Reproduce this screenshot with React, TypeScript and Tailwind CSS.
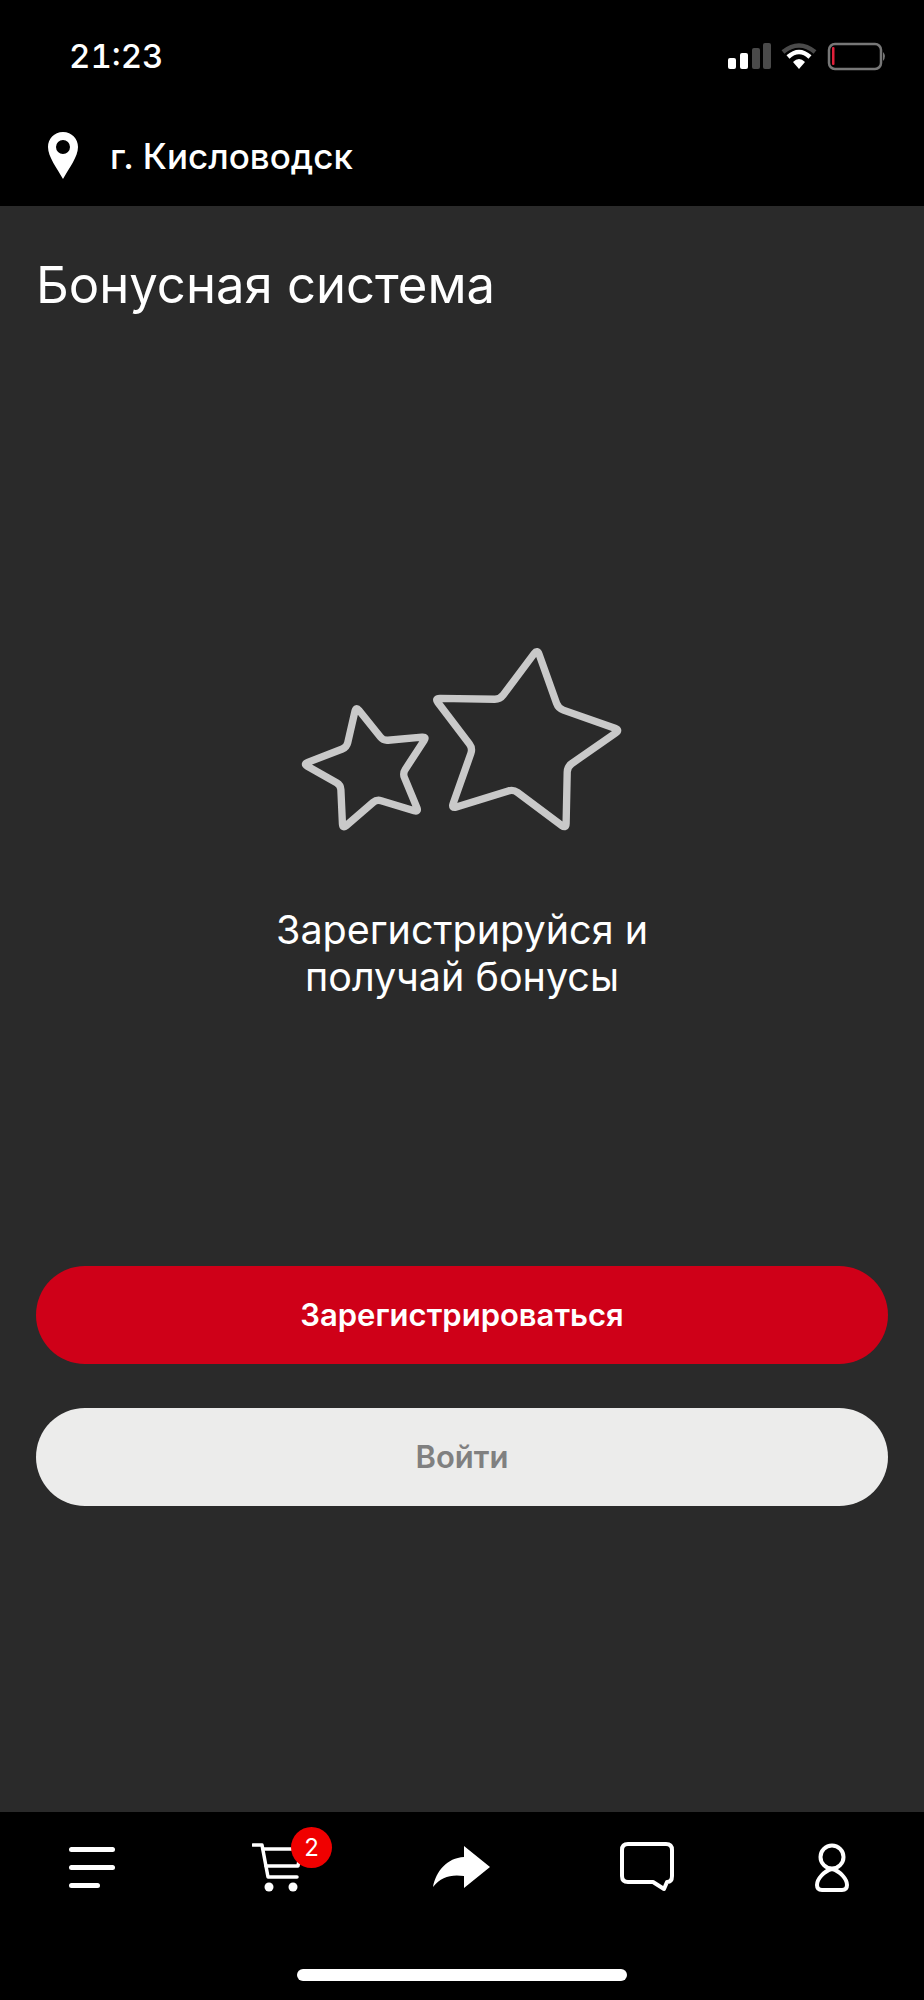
import React from "react";

const font = { fontFamily: "Inter, 'Noto Sans', sans-serif" };

// polygon with softened corners, used for the two stars
function rounded(points: number[][], r: number) {
  let d = "";
  points.forEach((p, i) => {
    const prev = points[(i + points.length - 1) % points.length];
    const next = points[(i + 1) % points.length];
    const a = Math.hypot(prev[0] - p[0], prev[1] - p[1]);
    const b = Math.hypot(next[0] - p[0], next[1] - p[1]);
    const x1 = p[0] + ((prev[0] - p[0]) * r) / a;
    const y1 = p[1] + ((prev[1] - p[1]) * r) / a;
    const x2 = p[0] + ((next[0] - p[0]) * r) / b;
    const y2 = p[1] + ((next[1] - p[1]) * r) / b;
    d += `${i === 0 ? "M" : "L"}${x1} ${y1} Q${p[0]} ${p[1]} ${x2} ${y2} `;
  });
  return d + "Z";
}

const bigStar = [[772, 58], [835, 235], [1020, 300], [862, 410], [858, 596], [700, 478], [514, 536], [578, 355], [464, 205], [660, 208]];
const smallStar = [[228, 230], [310, 332], [440, 320], [368, 430], [416, 546], [290, 508], [188, 596], [182, 465], [70, 402], [200, 352]];

function StatusIcons() {
  return (
    <svg width="160" height="30" viewBox="0 0 160 30" className="block">
      <rect x="0" y="16" width="8" height="11" rx="2" fill="#fff" />
      <rect x="12" y="11" width="8" height="16" rx="2" fill="#fff" />
      <rect x="24" y="6" width="8" height="21" rx="2" fill="#4a4a4a" />
      <rect x="35" y="1" width="8" height="26" rx="2" fill="#4a4a4a" />
      <path d="M55 10 Q71 -3 87 10" fill="none" stroke="#4a4a4a" strokeWidth="4.500" />
      <path d="M60 15 Q71 5 82 15" fill="none" stroke="#fff" strokeWidth="4.500" />
      <path d="M65 20 Q71 14 77 20 L71 27 Z" fill="#fff" />
      <rect x="101" y="2" width="52" height="25" rx="6" fill="none" stroke="#777" strokeWidth="2.500" />
      <rect x="104" y="5" width="2.500" height="18" rx="1" fill="#e0203a" />
      <path d="M155 10 Q159 14 155 19 Z" fill="#777" />
    </svg>
  );
}

function Pin() {
  return (
    <svg width="32" height="47" viewBox="0 0 32 47">
      <path
        fillRule="evenodd"
        fill="#fff"
        d="M16 0C7 0 1 7 1 15c0 10 9 21 15 32 6-11 15-22 15-32C31 7 25 0 16 0Zm0 8a7 7 0 1 1 0 14 7 7 0 0 1 0-14Z"
      />
    </svg>
  );
}

function Stars() {
  return (
    <svg width="360" height="220" viewBox="0 0 1080 660" className="block">
      <g fill="none" stroke="#c9c9c9" strokeWidth="22" strokeLinejoin="round">
        <path d={rounded(bigStar, 16)} />
        <path d={rounded(smallStar, 14)} />
      </g>
    </svg>
  );
}

function MenuIcon() {
  return (
    <div className="flex w-[46px] flex-col gap-[13px]">
      <div className="h-[5px] w-[46px] rounded-full bg-white" />
      <div className="h-[5px] w-[46px] rounded-full bg-white" />
      <div className="h-[5px] w-[31px] rounded-full bg-white" />
    </div>
  );
}

function CartIcon() {
  return (
    <div className="relative h-[50px] w-[50px]">
      <svg width="50" height="50" viewBox="0 0 50 50" className="block">
        <g fill="none" stroke="#fff" strokeWidth="3.500" strokeLinecap="round" strokeLinejoin="round">
          <path d="M1 3 H10 L16 35 H45" />
          <path d="M11 7 H49 L46 24 H14" />
        </g>
        <circle cx="17" cy="45" r="4.500" fill="#fff" />
        <circle cx="41" cy="45" r="4.500" fill="#fff" />
      </svg>
      <div className="absolute left-[39px] top-[-15px] flex h-[41px] w-[41px] items-center justify-center rounded-full bg-[#f00000] text-[24px] text-white">
        2
      </div>
    </div>
  );
}

function ShareIcon() {
  return (
    <svg width="58" height="44" viewBox="0 0 58 44" className="block">
      <path fill="#fff" d="M31 1 L57 22 L31 43 L31 31 C18 29 8 32 0 42 C3 26 14 13 31 12 Z" />
    </svg>
  );
}

function ChatIcon() {
  return (
    <svg width="54" height="50" viewBox="0 0 54 50" className="block">
      <path
        fill="none"
        stroke="#fff"
        strokeWidth="4"
        strokeLinejoin="round"
        d="M8 2 H46 Q52 2 52 8 V34 Q52 40 47 40 L44 47 L33 40 H8 Q2 40 2 34 V8 Q2 2 8 2 Z"
      />
    </svg>
  );
}

function UserIcon() {
  return (
    <svg width="34" height="49" viewBox="0 0 34 49" className="block">
      <g fill="none" stroke="#fff" strokeWidth="4" strokeLinejoin="round">
        <circle cx="17" cy="14" r="11.500" />
        <path d="M17 26 C9 28 2 36 2 42 Q2 47 7 47 H27 Q32 47 32 42 C32 36 25 28 17 26 Z" />
      </g>
    </svg>
  );
}

export default function App() {
  return (
    <div className="flex h-[2000px] w-[924px] flex-col bg-[#2a2a2a] text-white" style={font}>
      <header className="h-[206px] bg-black">
        <div className="flex items-start justify-between pl-[69px] pr-[36px] pt-[36px]">
          <span className="text-[33px] font-medium leading-[40px] tabular-nums">21:23</span>
          <div className="pt-[6px]">
            <StatusIcons />
          </div>
        </div>
        <div className="mt-[56px] flex items-center gap-[31px] pl-[47px]">
          <Pin />
          <span className="text-[35px] font-medium leading-[40px]">г. Кисловодск</span>
        </div>
      </header>

      <main className="flex flex-1 flex-col">
        <h1 className="pl-[36px] pt-[49px] text-[50.800px] font-normal leading-[60px]">Бонусная система</h1>

        <div className="mt-[315px] flex justify-center pr-[4px]">
          <Stars />
        </div>

        <p className="mt-[57px] text-center text-[39.500px] leading-[47px]">
          Зарегистрируйся и
          <br />
          получай бонусы
        </p>

        <div className="mt-[265px] flex flex-col gap-[44px] px-[36px]">
          <button className="h-[98px] rounded-full bg-[#cf0018] text-[31px] font-semibold text-white">
            Зарегистрироваться
          </button>
          <button className="h-[98px] rounded-full bg-[#ececeb] text-[31px] font-semibold text-[#808080]">
            Войти
          </button>
        </div>
      </main>

      <nav className="h-[188px] bg-black">
        <div className="grid h-[95px] grid-cols-5 items-center pt-[15px]">
          <div className="flex justify-center"><MenuIcon /></div>
          <div className="flex justify-center"><CartIcon /></div>
          <div className="flex justify-center"><ShareIcon /></div>
          <div className="flex justify-center"><ChatIcon /></div>
          <div className="flex justify-center"><UserIcon /></div>
        </div>
        <div className="mt-[62px] flex justify-center">
          <div className="h-[12px] w-[330px] rounded-full bg-white" />
        </div>
      </nav>
    </div>
  );
}
